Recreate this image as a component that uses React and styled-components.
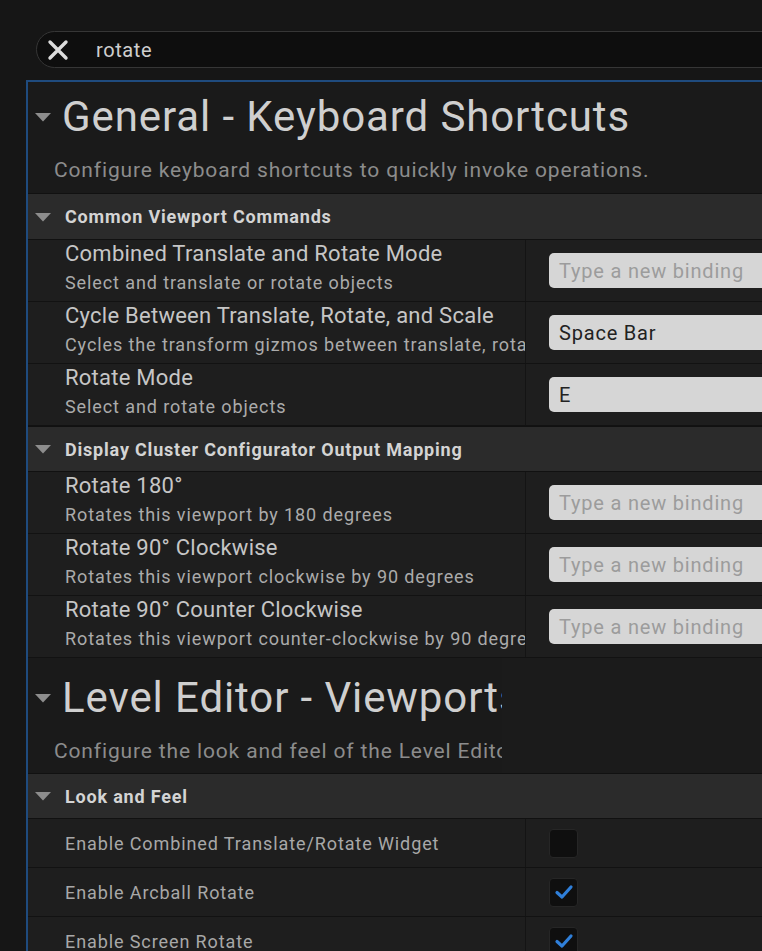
import React from 'react';
import styled, { createGlobalStyle } from 'styled-components';

const Global = createGlobalStyle`
  html, body {
    margin: 0;
    background: #161616;
    overflow: hidden;
    font-family: Roboto, "Liberation Sans", sans-serif;
  }
`;

const Page = styled.div`
  width: 762px;
  height: 951px;
  overflow: hidden;
  padding-top: 31px;
  box-sizing: border-box;
`;

const SearchBar = styled.div`
  margin-left: 36px;
  width: 760px;
  height: 37px;
  display: flex;
  align-items: center;
  background: #0e0e0e;
  border: 1px solid #363636;
  border-radius: 19px 0 0 19px;
  box-sizing: border-box;
  padding-left: 9px;
  gap: 26px;
  span {
    color: #cfcfcf;
    font-size: 20px;
    letter-spacing: 0.6px;
  }
`;

const Panel = styled.div`
  margin-top: 12px;
  margin-left: 26px;
  width: 780px;
  border-left: 2px solid #1f4b7e;
  border-top: 2px solid #1f4b7e;
  background: #1b1b1b;
`;

const SectionHead = styled.div`
  width: ${p => p.$clip ? '474px' : 'auto'};
  overflow: hidden;
  white-space: nowrap;
  padding: ${p => p.$top}px 0 ${p => p.$bottom}px 0;
  background: #1a1a1a;
`;

const SectionTitle = styled.div`
  display: flex;
  align-items: center;
  gap: 11px;
  padding-left: 7px;
  color: #cfcfcf;
  font-size: 42px;
  letter-spacing: 0.9px;
  line-height: 48px;
`;

const SectionDesc = styled.div`
  margin-top: 17px;
  padding-left: 26px;
  color: #8c8c8c;
  font-size: 21px;
  letter-spacing: 0.85px;
  line-height: 24px;
`;

const Category = styled.div`
  height: ${p => p.$h}px;
  display: flex;
  align-items: center;
  gap: 14px;
  padding-left: 7px;
  background: #2b2b2b;
  border-top: 1px solid #111;
  border-bottom: 1px solid #111;
  box-sizing: border-box;
  color: #d4d4d4;
  font-weight: bold;
  font-size: 18px;
  letter-spacing: 0.8px;
`;

const Row = styled.div`
  display: grid;
  grid-template-columns: 497px 1fr;
  height: ${p => p.$h}px;
  background: #1e1e1e;
  border-bottom: 1px solid #121212;
  box-sizing: border-box;
`;

const NameCell = styled.div`
  padding-left: 37px;
  overflow: hidden;
  white-space: nowrap;
  display: flex;
  flex-direction: column;
  justify-content: ${p => p.$top ? 'flex-start' : 'center'};
  padding-top: ${p => p.$top ? '1px' : '0'};
`;

const Title = styled.div`
  color: #c6c6c6;
  font-size: 22px;
  letter-spacing: 0.25px;
  line-height: 26px;
`;

const Sub = styled.div`
  margin-top: 4px;
  color: #ababab;
  font-size: 18px;
  letter-spacing: 0.9px;
  line-height: 24px;
`;

const Label = styled.div`
  color: #a8a8a8;
  font-size: 18px;
  letter-spacing: 0.9px;
`;

const ValueCell = styled.div`
  border-left: 1px solid #141414;
  display: flex;
  align-items: center;
  padding-left: 23px;
`;

const Binding = styled.div`
  width: 260px;
  height: 35px;
  border-radius: 5px;
  background: #d6d6d6;
  display: flex;
  align-items: center;
  padding-left: 10px;
  box-sizing: border-box;
  font-size: 20px;
  letter-spacing: 0.8px;
  color: ${p => p.$empty ? '#9c9c9c' : '#222'};
`;

const Check = styled.div`
  width: 29px;
  height: 29px;
  border-radius: 4px;
  background: #0f0f0f;
  border: 1px solid #262626;
  box-sizing: border-box;
  display: flex;
  align-items: center;
  justify-content: center;
`;

const Arrow = () => (
  <svg width="16" height="10" viewBox="0 0 16 10" style={{ flex: 'none' }}>
    <polygon points="0,1 16,1 8,9.5" fill="#8d8d8d" />
  </svg>
);

const CloseIcon = () => (
  <svg width="24" height="24" viewBox="0 0 24 24">
    <path d="M4 4 L20 20 M20 4 L4 20" stroke="#dcdcdc" strokeWidth="3.4" strokeLinecap="round" />
  </svg>
);

const Tick = () => (
  <svg width="20" height="16" viewBox="0 0 20 16">
    <path d="M3 8.5 L8 13 L17 3" stroke="#2f7fd9" strokeWidth="3.2" fill="none" strokeLinecap="round" strokeLinejoin="round" />
  </svg>
);

const commonRows = [
  { title: 'Combined Translate and Rotate Mode', sub: 'Select and translate or rotate objects', value: '' },
  { title: 'Cycle Between Translate, Rotate, and Scale', sub: 'Cycles the transform gizmos between translate, rotate, and scale', value: 'Space Bar' },
  { title: 'Rotate Mode', sub: 'Select and rotate objects', value: 'E' },
];

const clusterRows = [
  { title: 'Rotate 180°', sub: 'Rotates this viewport by 180 degrees', value: '' },
  { title: 'Rotate 90° Clockwise', sub: 'Rotates this viewport clockwise by 90 degrees', value: '' },
  { title: 'Rotate 90° Counter Clockwise', sub: 'Rotates this viewport counter-clockwise by 90 degrees', value: '' },
];

const lookRows = [
  { label: 'Enable Combined Translate/Rotate Widget', on: false },
  { label: 'Enable Arcball Rotate', on: true },
  { label: 'Enable Screen Rotate', on: true },
];

function ShortcutRow({ title, sub, value }) {
  return (
    <Row $h={62}>
      <NameCell $top>
        <Title>{title}</Title>
        <Sub>{sub}</Sub>
      </NameCell>
      <ValueCell>
        <Binding $empty={!value}>{value || 'Type a new binding'}</Binding>
      </ValueCell>
    </Row>
  );
}

export default function App() {
  return (
    <Page>
      <Global />
      <SearchBar>
        <CloseIcon />
        <span>rotate</span>
      </SearchBar>
      <Panel>
        <SectionHead $top={11} $bottom={11}>
          <SectionTitle><Arrow />General - Keyboard Shortcuts</SectionTitle>
          <SectionDesc>Configure keyboard shortcuts to quickly invoke operations.</SectionDesc>
        </SectionHead>
        <Category $h={47}><Arrow />Common Viewport Commands</Category>
        {commonRows.map(r => <ShortcutRow key={r.title} {...r} />)}
        <Category $h={46}><Arrow />Display Cluster Configurator Output Mapping</Category>
        {clusterRows.map(r => <ShortcutRow key={r.title} {...r} />)}
        <SectionHead $clip $top={16} $bottom={10}>
          <SectionTitle><Arrow />Level Editor - Viewports</SectionTitle>
          <SectionDesc>Configure the look and feel of the Level Editor</SectionDesc>
        </SectionHead>
        <Category $h={46}><Arrow />Look and Feel</Category>
        {lookRows.map(r => (
          <Row key={r.label} $h={49}>
            <NameCell><Label>{r.label}</Label></NameCell>
            <ValueCell>
              <Check>{r.on && <Tick />}</Check>
            </ValueCell>
          </Row>
        ))}
      </Panel>
    </Page>
  );
}
